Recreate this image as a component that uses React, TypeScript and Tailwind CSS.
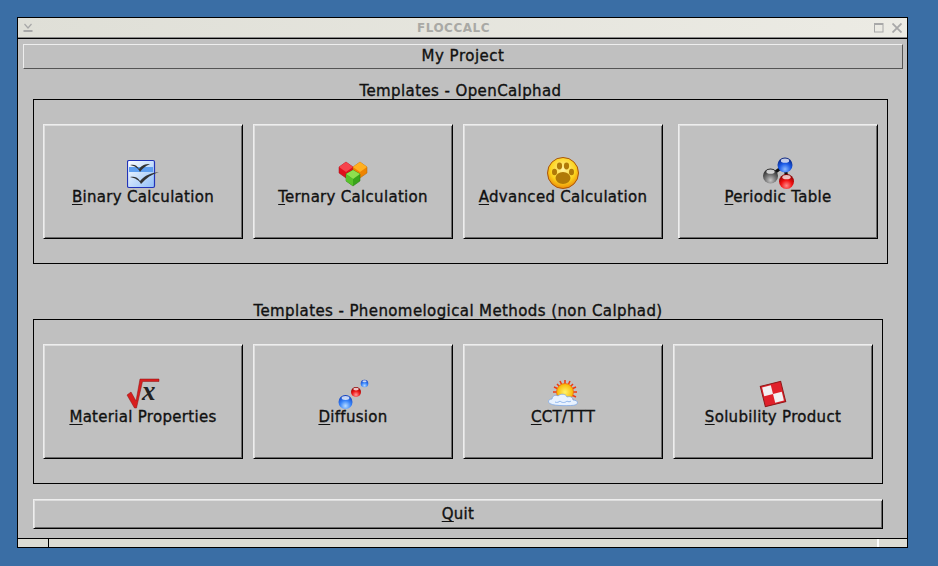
import React from 'react';

const Sphere = ({ id, cx, cy, r, light, mid, dark }: { id: string; cx: number; cy: number; r: number; light: string; mid: string; dark: string }) => (
  <g>
    <defs>
      <radialGradient id={id} cx="50%" cy="78%" r="75%">
        <stop offset="0%" stopColor={light} />
        <stop offset="50%" stopColor={mid} />
        <stop offset="100%" stopColor={dark} />
      </radialGradient>
    </defs>
    <circle cx={cx} cy={cy} r={r} fill={`url(#${id})`} />
    <ellipse cx={cx} cy={cy - r * 0.58} rx={r * 0.55} ry={r * 0.28} fill="#fff" opacity="0.75" />
  </g>
);

const BinaryIcon = () => (
  <svg width="32" height="32" viewBox="0 0 32 32">
    <defs>
      <linearGradient id="docBg" x1="0" y1="0" x2="1" y2="1">
        <stop offset="0%" stopColor="#ffffff" />
        <stop offset="100%" stopColor="#8fbef8" />
      </linearGradient>
    </defs>
    <rect x="0.500" y="3.500" width="27" height="27" rx="1.500" fill="url(#docBg)" stroke="#2233b8" strokeWidth="1.200" />
    <rect x="2" y="10" width="24" height="5" fill="#5f9ff0" />
    <path d="M3 8c4-1 7 0 9 4 3-4 6-5 11-5-5 2-8 5-10 8-2-4-5-6-10-7z" fill="#333" />
    <path d="M3 20c4-1 8 0 10 4 5-6 11-8 19-9-7 2-13 6-18 12-2-4-6-6-11-7z" fill="#333" />
  </svg>
);

const TernaryIcon = () => (
  <svg width="32" height="32" viewBox="0 0 32 32">
    <path d="M9 5l7 5v6l-7 5-7-5v-6z" fill="#e0101c" stroke="#a01018" strokeWidth="0.500" />
    <path d="M9 5l7 5-7 5-7-5z" fill="#f6434c" />
    <path d="M23 5l7 5v6l-7 5-7-5v-6z" fill="#ee8400" stroke="#b86400" strokeWidth="0.500" />
    <path d="M23 5l7 5-7 5-7-5z" fill="#ffb020" />
    <path d="M16 13l7 4v7l-7 5-7-5v-7z" fill="#3aa51a" stroke="#24780e" strokeWidth="0.500" />
    <path d="M16 13l7 4-7 5-7-5z" fill="#8ee04e" />
    <path d="M16 22v7l-7-5v-7z" fill="#58c22a" />
  </svg>
);

const PawIcon = () => (
  <svg width="34" height="34" viewBox="0 0 34 34">
    <defs>
      <radialGradient id="pawBg" cx="50%" cy="38%" r="62%">
        <stop offset="0%" stopColor="#fff2a0" />
        <stop offset="65%" stopColor="#fcd31c" />
        <stop offset="100%" stopColor="#ec8a08" />
      </radialGradient>
    </defs>
    <circle cx="17" cy="17" r="15.500" fill="url(#pawBg)" stroke="#a8540c" strokeWidth="1" />
    <ellipse cx="17" cy="22" rx="7.500" ry="6" fill="#b07a08" />
    <ellipse cx="8.500" cy="16" rx="2.500" ry="3.200" fill="#b07a08" />
    <ellipse cx="13.500" cy="10" rx="2.600" ry="3.400" fill="#b07a08" />
    <ellipse cx="20.500" cy="10" rx="2.600" ry="3.400" fill="#b07a08" />
    <ellipse cx="25.500" cy="16" rx="2.500" ry="3.200" fill="#b07a08" />
  </svg>
);

const MoleculeIcon = () => (
  <svg width="32" height="32" viewBox="0 0 32 32">
    <path d="M8 19L23 8M23 8l2 16" stroke="#111" strokeWidth="3.200" fill="none" />
    <Sphere id="mGray" cx={8.500} cy={19} r={7.500} light="#c8c8c8" mid="#707070" dark="#222222" />
    <Sphere id="mBlue" cx={23} cy={8} r={7.500} light="#8ab8ff" mid="#1c5ce8" dark="#08207a" />
    <Sphere id="mRed" cx={24.500} cy={24.500} r={7.500} light="#ff8a8a" mid="#f01010" dark="#800000" />
  </svg>
);

const SqrtIcon = () => (
  <svg width="34" height="32" viewBox="0 0 34 32" overflow="visible">
    <path d="M1 18l4-3 5 9L14 2h19v2.500H16.500L10.500 31H8.500z" fill="#d81e1e" stroke="#8f1010" strokeWidth="0.500" />
    <text x="16" y="23" fontFamily="'Liberation Serif', serif" fontStyle="italic" fontWeight="700" fontSize="27" fill="#222">x</text>
  </svg>
);

const DiffusionIcon = () => (
  <svg width="34" height="32" viewBox="0 0 34 32">
    <Sphere id="dBlue" cx={9.500} cy={25} r={7} light="#b8dcff" mid="#3a86fa" dark="#1040c0" />
    <Sphere id="dRed" cx={20} cy={15} r={5} light="#ff9a9a" mid="#ee1818" dark="#8a0000" />
    <Sphere id="dSmall" cx={28.500} cy={6.500} r={3.800} light="#b8dcff" mid="#3a86fa" dark="#1040c0" />
  </svg>
);

const WeatherIcon = () => (
  <svg width="32" height="32" viewBox="0 0 32 32">
    <defs>
      <radialGradient id="sunBg" cx="50%" cy="50%" r="50%">
        <stop offset="0%" stopColor="#fff46a" />
        <stop offset="100%" stopColor="#f8b400" />
      </radialGradient>
    </defs>
    <g stroke="#ef3a12" strokeWidth="1.600">
      <path d="M18 3v24M6 15h24M10 7l16 16M26 7L10 23M13 4l10 22M23 4L13 26M7 10l22 10M29 10L7 20" />
    </g>
    <circle cx="18" cy="15" r="8.500" fill="url(#sunBg)" stroke="#ef6a12" strokeWidth="0.800" />
    <path d="M4 27c-4-1-3-5 1-5 0-3 4-5 6-3 3-3 8-2 9 1 3-1 6 0 6 3 5 0 6 4 2 5-3 1-21 1-24-1z" fill="#e8f2ff" stroke="#7faae8" strokeWidth="0.800" />
    <path d="M8 25c2 1 4 0 5-1 2 2 5 2 7 0 1 1 3 1 4 0" stroke="#8cb4ee" strokeWidth="1" fill="none" />
  </svg>
);

const CheckerIcon = () => (
  <svg width="32" height="32" viewBox="0 0 32 32">
    <g transform="rotate(-14 16 17)">
      <rect x="5.500" y="6.500" width="21" height="21" fill="#e0202a" stroke="#8e1a1a" strokeWidth="1" />
      <rect x="7" y="8" width="9" height="9" fill="#f2f0f2" />
      <rect x="16" y="17" width="9" height="9" fill="#f2f0f2" />
    </g>
  </svg>
);

function TemplateButton({ icon, mnemonic, label, width = 'w-[200px]' }: { icon: React.ReactNode; mnemonic: string; label: string; width?: string }) {
  return (
    <button className={`${width} h-[115px] flex flex-col items-center justify-center bg-[#c0c0c0] border border-t-[#eeeeee] border-l-[#eeeeee] border-r-black border-b-black shadow-[inset_1px_1px_0_#dddddd,inset_-1px_-1px_0_#6a6a6a]`}>
      <div className="h-[32px] flex items-center justify-center">{icon}</div>
      <div className="h-[18px] leading-[17px] text-[15px] tracking-[0.3px] [-webkit-text-stroke:0.35px_#111111] text-[#111111] whitespace-nowrap">
        <span className="underline underline-offset-2 [text-decoration-skip-ink:none]">{mnemonic}</span>
        {label}
      </div>
    </button>
  );
}

function Group({ title, width, children }: { title: string; width: string; children: React.ReactNode }) {
  return (
    <section className={width}>
      <div className="h-[20px] leading-[24px] text-center text-[15px] tracking-[0.4px] [-webkit-text-stroke:0.35px_#111111] text-[#111111]">{title}</div>
      <div className="h-[165px] border border-black pt-[24px] pl-[9px] flex">{children}</div>
    </section>
  );
}

export default function App() {
  return (
    <div className="w-[938px] h-[566px] bg-[#3a6ea5] pt-[17px] pl-[17px] overflow-hidden font-['DejaVu_Sans',sans-serif]">
      <div className="w-[891px] h-[531px] border border-black flex flex-col bg-[#c0c0c0]">
        {/* Title bar */}
        <div className="h-[21px] flex items-center px-[5px] bg-gradient-to-r from-[#dfdfd7] to-[#ecebe4] border-b border-b-black shadow-[inset_0_-1px_0_#888888] shrink-0">
          <svg width="10" height="10" viewBox="0 0 10 10" className="text-[#a8a8a8]">
            <path d="M1.500 1L5 5l3.500-4" stroke="currentColor" strokeWidth="1.200" fill="none" />
            <rect x="0.500" y="7" width="9" height="2" fill="currentColor" />
          </svg>
          <div className="flex-1 text-center text-[12px] font-bold tracking-[0.5px] text-[#a9a9a5]">FLOCCALC</div>
          <svg width="10" height="10" viewBox="0 0 10 10" className="mr-[8px]">
            <rect x="0.500" y="0.500" width="8.500" height="8.500" stroke="#a8a8a8" fill="none" />
            <rect x="0.500" y="0.500" width="8.500" height="1.500" fill="#a8a8a8" />
          </svg>
          <svg width="10" height="10" viewBox="0 0 10 10">
            <path d="M0.500 0.500l9 9M9.500 0.500l-9 9" stroke="#a8a8a8" strokeWidth="1.800" />
          </svg>
        </div>

        {/* Body */}
        <div className="flex-1 flex flex-col pt-[5px] pl-[5px]">
          <div className="w-[880px] h-[25px] leading-[23px] text-center text-[15px] tracking-[0.5px] [-webkit-text-stroke:0.35px_#111111] text-[#111111] border border-t-[#eeeeee] border-l-[#eeeeee] border-r-[#555555] border-b-[#555555]">
            My Project
          </div>

          <div className="pl-[10px] pt-[10px]">
            <Group title="Templates - OpenCalphad" width="w-[855px]">
              <div className="flex gap-[10px]">
                <TemplateButton icon={<BinaryIcon />} mnemonic="B" label="inary Calculation" />
                <TemplateButton icon={<TernaryIcon />} mnemonic="T" label="ernary Calculation" />
                <TemplateButton icon={<PawIcon />} mnemonic="A" label="dvanced Calculation" />
              </div>
              <div className="ml-[15px]">
                <TemplateButton icon={<MoleculeIcon />} mnemonic="P" label="eriodic Table" />
              </div>
            </Group>

            <div className="pt-[35px]">
              <Group title="Templates - Phenomelogical Methods (non Calphad)" width="w-[850px]">
                <div className="flex gap-[10px]">
                  <TemplateButton icon={<SqrtIcon />} mnemonic="M" label="aterial Properties" />
                  <TemplateButton icon={<DiffusionIcon />} mnemonic="D" label="iffusion" />
                  <TemplateButton icon={<WeatherIcon />} mnemonic="C" label="CT/TTT" />
                  <TemplateButton icon={<CheckerIcon />} mnemonic="S" label="olubility Product" />
                </div>
              </Group>
            </div>

            <button className="mt-[15px] w-[850px] h-[30px] pt-[1px] text-[15px] tracking-[0.3px] [-webkit-text-stroke:0.35px_#111111] text-[#111111] bg-[#c0c0c0] border border-t-[#eeeeee] border-l-[#eeeeee] border-r-black border-b-black shadow-[inset_1px_1px_0_#dddddd,inset_-1px_-1px_0_#6a6a6a]">
              <span className="underline underline-offset-2 [text-decoration-skip-ink:none]">Q</span>uit
            </button>
          </div>
        </div>

        {/* Resize handles */}
        <div className="h-[9px] flex border-t border-black bg-[#dcdcd4] shrink-0">
          <div className="w-[31px] border-r border-black" />
          <div className="flex-1" />
          <div className="w-[30px] border-l-2 border-white" />
        </div>
      </div>
    </div>
  );
}
